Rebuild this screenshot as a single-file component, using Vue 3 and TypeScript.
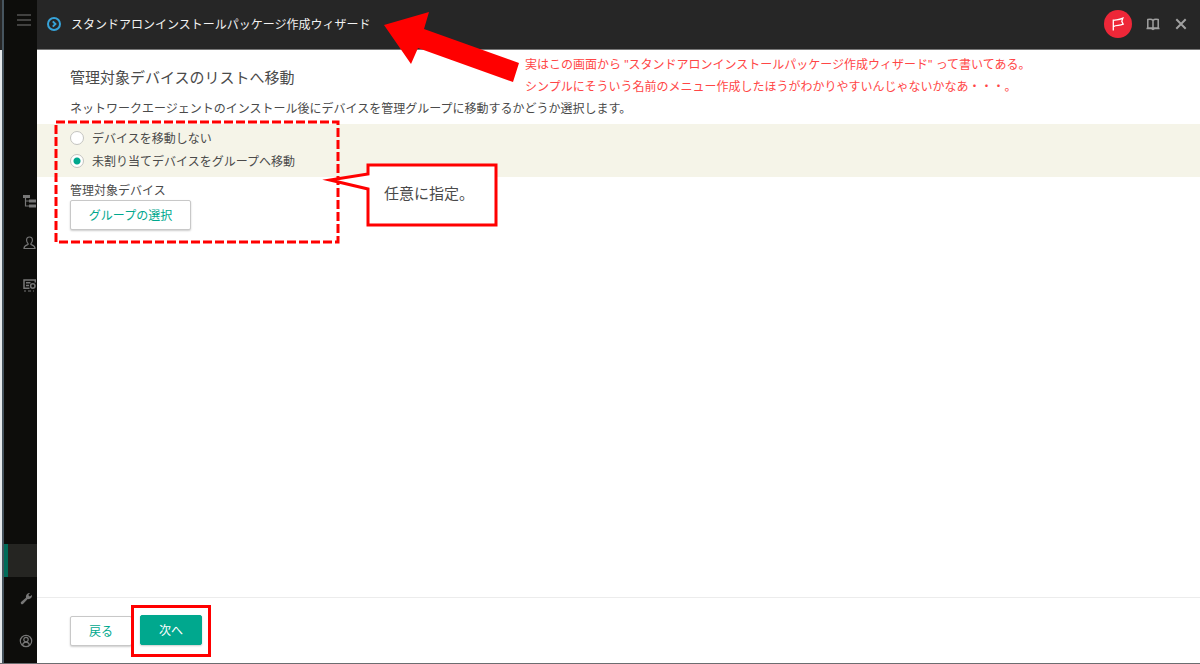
<script setup lang="ts">
import { ref } from 'vue'

const choice = ref<'stay' | 'move'>('move')
const options: { value: 'stay' | 'move'; label: string }[] = [
  { value: 'stay', label: 'デバイスを移動しない' },
  { value: 'move', label: '未割り当てデバイスをグループへ移動' },
]
</script>

<template>
  <div class="page">
    <div class="edge"></div>
    <nav class="rail" aria-label="メインメニュー">
      <button class="rail-btn menu" aria-label="メニュー">
        <svg width="14" height="12" viewBox="0 0 14 12"><path d="M0 1H14M0 6H14M0 11H14" /></svg>
      </button>
      <button class="rail-btn tree" aria-label="階層">
        <svg width="13" height="14" viewBox="0 0 13 14"><path class="solid" d="M0 1H7V4H0ZM6 5.5H13V8.5H6ZM6 10.5H13V13.5H6Z" /><path d="M2.5 3V12H7M2.5 7H7" /></svg>
      </button>
      <button class="rail-btn person" aria-label="ユーザー">
        <svg width="13" height="14" viewBox="0 0 13 14"><path d="M6.5 1C4.5 1 3.5 2.4 3.6 4.2C3.7 6 4.4 7 5 7.5V8.5C3 9.3 1 9.5 1 12.5H12C12 9.5 10 9.3 8 8.5V7.5C8.6 7 9.3 6 9.4 4.2C9.5 2.4 8.5 1 6.5 1Z" /></svg>
      </button>
      <button class="rail-btn console" aria-label="操作">
        <svg width="13" height="14" viewBox="0 0 13 14"><path d="M12.3 4.5V2H1V10.3H6.5M3 4.8H7.5M3 7.5H6" stroke-width="1.5" /><path d="M1 13H3M5 13H8M10 13H11" stroke-width="1" /><circle cx="9.8" cy="8" r="2.2" stroke-width="1.5" /></svg>
      </button>
      <div class="rail-active"></div>
      <button class="rail-btn wrench" aria-label="設定">
        <svg width="13" height="13" viewBox="0 0 13 13"><path class="solid" d="M1 10L6 5.7C5.5 3 7.5.7 10 1L8.3 3L9.7 4.6L12 3C12.2 5.6 10.2 7.5 7.7 7.1L3 12Q1.8 12.8 1 11.7Q.4 10.8 1 10Z" /></svg>
      </button>
      <button class="rail-btn account" aria-label="アカウント">
        <svg width="14" height="14" viewBox="0 0 14 14"><circle cx="7" cy="7" r="5.7" /><circle cx="7" cy="5.6" r="2.2" /><path d="M3.6 11.3C3.8 9 5 8.2 7 8.2S10.2 9 10.4 11.3" /></svg>
      </button>
    </nav>

    <main class="panel">
      <header class="bar">
        <svg class="mark" width="14" height="14" viewBox="0 0 14 14"><circle cx="7" cy="7" r="6" /><path d="M5.8 4.4L8.4 7L5.8 9.6" /></svg>
        <h1>スタンドアロンインストールパッケージ作成ウィザード</h1>
        <div class="tools">
          <button class="flag" aria-label="通知">
            <svg width="14" height="14" viewBox="0 0 14 14"><path d="M2.3 13.5V2.5M2.3 3.5C5 2.2 7 3.6 11.8 1.2L10.8 4.4L12.2 7.2C8 9.2 6 7.4 2.3 9.6" /></svg>
          </button>
          <button class="tool" aria-label="ヘルプ">
            <svg width="14" height="14" viewBox="0 0 14 14"><path d="M7 3.5C6 2.2 3.5 2.2 1.8 2.6V11H12.2V2.6C10.5 2.2 8 2.2 7 3.5ZM7 3.5V11M.5 11.5H5.5L7 12.3L8.5 11.5H13.5" /></svg>
          </button>
          <button class="tool" aria-label="閉じる">
            <svg width="14" height="14" viewBox="0 0 14 14"><path d="M2.3 2.3L11.7 11.7M11.7 2.3L2.3 11.7" stroke-width="2" /></svg>
          </button>
        </div>
      </header>

      <section class="content">
        <h2>管理対象デバイスのリストへ移動</h2>
        <p class="lead">ネットワークエージェントのインストール後にデバイスを管理グループに移動するかどうか選択します。</p>
        <div class="band" role="radiogroup" aria-label="デバイスの移動">
          <label v-for="o in options" :key="o.value" class="option">
            <input v-model="choice" type="radio" name="move" :value="o.value" />
            <span>{{ o.label }}</span>
          </label>
        </div>
        <div class="group">
          <span id="group-label" class="group-label">管理対象デバイス</span>
          <button class="btn wide" aria-describedby="group-label">グループの選択</button>
        </div>
      </section>

      <footer class="foot">
        <button class="btn back">戻る</button>
        <div class="next-frame"><button class="btn primary">次へ</button></div>
      </footer>
    </main>

    <svg class="frame" width="286" height="126" viewBox="0 0 286 126"><rect x="2" y="3" width="282" height="120" /></svg>
    <svg class="arrow" width="136" height="74" viewBox="0 0 136 74"><path d="M0 15L45 2L40 19L135 53L129 72L34 38L27 54Z" /></svg>
    <p class="remark">実はこの画面から "スタンドアロンインストールパッケージ作成ウィザード" って書いてある。<br />シンプルにそういう名前のメニュー作成したほうがわかりやすいんじゃないかなあ・・・。</p>
    <div class="callout">
      <svg width="176" height="66" viewBox="0 0 176 66"><path d="M46 2H174V62H46V26L8 17L46 11Z" /></svg>
      <p>任意に指定。</p>
    </div>
  </div>
</template>

<style>
body {
  margin: 0;
}
</style>

<style scoped>
.page {
  position: relative;
  display: flex;
  min-height: 100vh;
  box-sizing: border-box;
  border-bottom: 1px solid #6b6d70;
  background: #fff;
  color: #4a4a4a;
  font-family: "Liberation Sans", "Noto Sans CJK JP", sans-serif;
  font-size: 12px;
}
h1,
h2,
p {
  margin: 0;
  font-weight: 400;
}
button {
  padding: 0;
  border: 0;
  background: none;
  font: inherit;
}
svg {
  display: block;
  fill: none;
}
.edge {
  flex: none;
  width: 2px;
  background: linear-gradient(#262626 50px, #e6eaec 50px);
}
.rail {
  display: flex;
  flex-direction: column;
  align-items: flex-end;
  flex: none;
  box-sizing: border-box;
  width: 35px;
  border-left: 2px solid #46545e;
  background: #0d0d0b;
}
.rail-btn {
  flex: none;
  height: 42px;
  padding-right: 1px;
}
.rail-btn svg {
  stroke: #777;
  stroke-width: 1.2;
}
.rail-btn .solid {
  fill: #777;
  stroke: none;
}
.rail-btn.menu {
  height: 40px;
  padding-right: 6px;
}
.rail-btn.tree {
  margin-top: 140px;
}
.rail-btn.wrench,
.rail-btn.account {
  padding-right: 4px;
}
.rail-active {
  box-sizing: border-box;
  width: 100%;
  height: 33px;
  margin-top: auto;
  border-left: 4px solid #006b59;
  background: #252522;
}
.rail-btn.account {
  height: 44px;
}
.panel {
  display: flex;
  flex: 1;
  flex-direction: column;
  min-width: 0;
}
.bar {
  display: flex;
  align-items: center;
  box-sizing: border-box;
  height: 50px;
  padding: 0 12px 2px 10px;
  border-bottom: 1px solid #777;
  background: #262626;
}
.mark {
  stroke: #36a3d9;
  stroke-width: 2;
}
h1 {
  margin-left: 10px;
  color: #f2f2f2;
  font-size: 12px;
}
.tools {
  display: flex;
  align-items: center;
  gap: 14px;
  margin-left: auto;
}
.tool svg {
  stroke: #a0a0a0;
  stroke-width: 1.5;
}
.flag {
  display: grid;
  place-items: center;
  width: 28px;
  height: 28px;
  border-radius: 50%;
  background: #ee2738;
}
.flag svg {
  stroke: #fff;
  stroke-width: 1.3;
}
.content {
  flex: 1;
}
h2 {
  padding: 16px 33px 0;
  font-size: 15px;
  line-height: 24px;
}
.lead {
  padding: 9px 33px 5px;
  line-height: 20px;
}
.band {
  display: flex;
  flex-direction: column;
  box-sizing: border-box;
  height: 53px;
  padding: 2px 33px;
  background: #f5f4e8;
}
.option {
  display: flex;
  align-items: center;
  gap: 8px;
  height: 23px;
}
.option input {
  box-sizing: border-box;
  width: 14px;
  height: 14px;
  margin: 0;
  border: 1px solid #c4c4c0;
  border-radius: 50%;
  appearance: none;
  background: #fff;
}
.option input:checked {
  background: radial-gradient(circle, #00a88e 3px, #fff 4px);
}
.group {
  display: flex;
  flex-direction: column;
  align-items: flex-start;
  padding: 5px 33px;
}
.group-label {
  line-height: 18px;
}
.btn {
  box-sizing: border-box;
  height: 30px;
  padding-bottom: 2px;
  border: 1px solid #c8c8c8;
  border-radius: 2px;
  background: #fff;
  box-shadow: 0 1px 2px #00000033;
  color: #00a88e;
}
.wide {
  width: 121px;
}
.foot {
  display: flex;
  align-items: center;
  box-sizing: border-box;
  height: 66px;
  padding: 1px 0 0 33px;
  border-top: 1px solid #ececec;
}
.back {
  width: 62px;
}
.next-frame {
  box-sizing: border-box;
  width: 80px;
  height: 52px;
  margin-left: -1px;
  padding: 7px 6px;
  border: 3px solid #f00;
  background: #fff;
}
.primary {
  width: 62px;
  border-color: #00a88e;
  background: #00a88e;
  color: #fff;
}
.frame,
.arrow,
.remark,
.callout {
  position: absolute;
}
.frame {
  left: 54px;
  top: 119px;
  stroke: #f00;
  stroke-width: 3;
  stroke-dasharray: 9 3;
}
.arrow {
  left: 384px;
  top: 10px;
  fill: #f00;
}
.remark {
  left: 525px;
  top: 54px;
  color: #ff4646;
  line-height: 22px;
  white-space: nowrap;
}
.callout {
  left: 322px;
  top: 163px;
}
.callout svg {
  fill: #fff;
  stroke: #f00;
  stroke-width: 3;
  stroke-miterlimit: 10;
}
.callout p {
  position: absolute;
  left: 62px;
  top: 19px;
  font-size: 15px;
  line-height: 24px;
  white-space: nowrap;
}
</style>
